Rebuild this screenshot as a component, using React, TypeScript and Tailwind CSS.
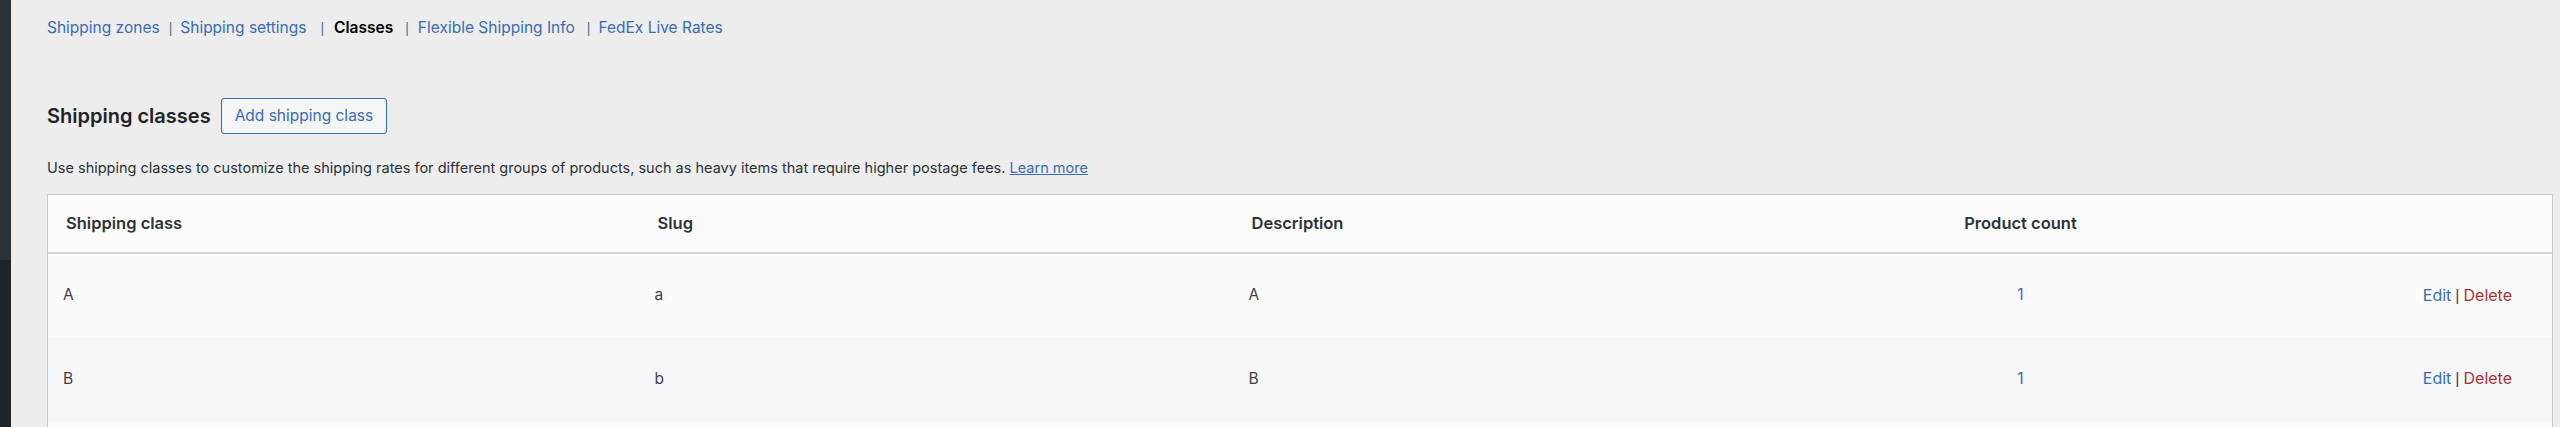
const font = { fontFamily: 'Inter, "Liberation Sans", sans-serif' };

interface ShippingClass {
  name: string;
  slug: string;
  description: string;
  count: number;
}

const classes: ShippingClass[] = [
  { name: 'A', slug: 'a', description: 'A', count: 1 },
  { name: 'B', slug: 'b', description: 'B', count: 1 },
];

function Sep({ className }: { className: string }) {
  return (
    <span className={className + ' text-[#5b6f8f] text-[14px]'} style={{ fontFamily: '"Liberation Sans", sans-serif' }}>
      |
    </span>
  );
}

export default function App() {
  return (
    <div className="flex min-h-screen bg-[#ededed] text-[#2c3338]" style={font}>
      {/* admin menu edge */}
      <div className="w-[11px] shrink-0 flex flex-col">
        <div className="h-[260px] bg-[#2c3338]" />
        <div className="flex-1 bg-[#1d2327]" />
      </div>

      <div className="flex-1 pl-[36px] pr-[7px]">
        {/* Sub navigation */}
        <div className="pt-[16px] h-[40px] text-[15.5px] leading-[24px] flex items-center">
          <a className="text-[#3a6cb3]">Shipping zones</a>
          <Sep className="ml-[9px] mr-[8px]" />
          <a className="text-[#3a6cb3]">Shipping settings</a>
          <Sep className="ml-[14px] mr-[10px]" />
          <span className="font-semibold text-black">Classes</span>
          <Sep className="ml-[12px] mr-[9px]" />
          <a className="text-[#3a6cb3]">Flexible Shipping Info</a>
          <Sep className="ml-[12px] mr-[8px]" />
          <a className="text-[#3a6cb3]">FedEx Live Rates</a>
        </div>

        {/* Heading */}
        <div className="mt-[58px] flex items-center h-[36px]">
          <h2 className="text-[20px] font-semibold text-[#1d2327]">Shipping classes</h2>
          <button className="ml-[10px] h-[36px] px-[13px] rounded-[3px] border border-[#3a6cb3] bg-[#f4f5f5] text-[15.5px] text-[#3a6cb3]">
            Add shipping class
          </button>
        </div>

        <p className="mt-[24px] text-[14.5px] leading-[20px] text-[#2c3338]">
          Use shipping classes to customize the shipping rates for different groups of products, such as heavy items that require higher postage fees.{' '}
          <a className="text-[#3a6cb3] underline">Learn more</a>
        </p>

        {/* Table */}
        <table className="mt-[16px] w-full table-fixed border-collapse border border-[#c8c9cc] bg-[#fcfcfc] text-[15.5px]">
          <colgroup>
            <col className="w-[592px]" />
            <col className="w-[594px]" />
            <col className="w-[593px]" />
            <col className="w-[388px]" />
            <col />
          </colgroup>
          <thead>
            <tr className="h-[58px] border-b-2 border-[#d4d5d7] text-[16.5px]">
              <th className="pl-[18px] text-left font-semibold text-[#2c3338]">Shipping class</th>
              <th className="pl-[18px] text-left font-semibold text-[#2c3338]">Slug</th>
              <th className="pl-[18px] text-left font-semibold text-[#2c3338]">Description</th>
              <th className="text-center font-semibold text-[#2c3338]">Product count</th>
              <th />
            </tr>
          </thead>
          <tbody>
            {classes.map((c, i) => (
              <tr key={c.slug} className={i % 2 === 1 ? 'h-[84px] bg-[#f6f7f8]' : 'h-[84px] bg-[#fbfbfb]'}>
                <td className="pl-[15px] text-[#3c434a]">{c.name}</td>
                <td className="pl-[15px] text-[#3c434a]">{c.slug}</td>
                <td className="pl-[15px] text-[#3c434a]">{c.description}</td>
                <td className="text-center text-[#3a6cb3]">{c.count}</td>
                <td className="pr-[40px] text-right text-[16px]">
                  <a className="text-[#3a6cb3]">Edit</a>
                  <span className="mx-[4px] text-[#3c434a]" style={{ fontFamily: '"Liberation Sans", sans-serif' }}>|</span>
                  <a className="text-[#a83232]">Delete</a>
                </td>
              </tr>
            ))}
            <tr className="h-[84px] bg-[#fbfbfb]">
              <td colSpan={5} />
            </tr>
          </tbody>
        </table>
      </div>
    </div>
  );
}
